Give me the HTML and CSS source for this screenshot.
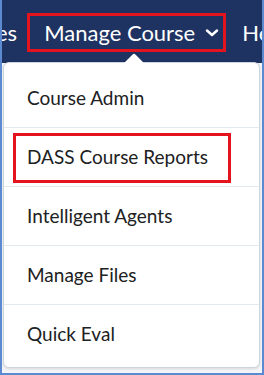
FILE: index.html
```html
<!DOCTYPE html>
<html lang="en">
<head>
    <meta charset="UTF-8">
    <meta name="viewport" content="width=device-width, initial-scale=1.0">
    <title>Manage Course</title>
    <link rel="stylesheet" href="styles.css">
</head>
<body>
    <div class="frame">
        <nav class="navbar">
            <span class="nav-item nav-cut">es</span>
            <span class="nav-item nav-active">
                Manage Course
                <svg class="chevron" width="14" height="8" viewBox="0 0 14 8">
                    <path d="M2 1.5 L7 6 L12 1.5" fill="none" stroke="#fff" stroke-width="2.4" stroke-linecap="round" stroke-linejoin="round"/>
                </svg>
            </span>
            <span class="nav-item">Help</span>
        </nav>

        <div class="page"></div>

        <div class="dropdown">
            <div class="arrow"></div>
            <ul class="menu">
                <li>Course Admin</li>
                <li class="marked">DASS Course Reports</li>
                <li>Intelligent Agents</li>
                <li>Manage Files</li>
                <li>Quick Eval</li>
            </ul>
        </div>
    </div>
</body>
</html>
```

FILE: styles.css
```css
* {
    margin: 0;
    padding: 0;
    box-sizing: border-box;
    font-family: Lato, "Open Sans", sans-serif;
}

body {
    background-color: #5b8ad0;
}

.frame {
    position: relative;
    width: 264px;
    height: 375px;
    overflow: hidden;
    border: 2px solid #5b8ad0;
    border-top: none;
    background-color: #f3f5f8;
}

.navbar {
    display: flex;
    align-items: center;
    height: 63px;
    padding-top: 1px;
    background-color: #1f3363;
    color: white;
    font-size: 22px;
    white-space: nowrap;
}

.nav-cut {
    margin-left: -6px;
}

.nav-active {
    display: flex;
    align-items: center;
    gap: 10px;
    height: 39px;
    margin-left: 10px;
    padding: 0 4px 0 14px;
    border: 3px solid #e3141e;
}

.nav-active + .nav-item {
    margin-left: 16px;
}

.chevron {
    margin-top: 2px;
}

.dropdown {
    position: absolute;
    top: 62px;
    left: 1px;
    width: 257px;
    height: 306px;
    padding: 6px 0 4px;
    background-color: white;
    border: 1px solid #cdd4dd;
    border-radius: 6px;
    box-shadow: 0 1px 3px rgba(0, 0, 0, 0.12);
}

.arrow {
    position: absolute;
    top: -7px;
    left: 123px;
    width: 14px;
    height: 14px;
    background-color: white;
    transform: rotate(45deg);
    border-radius: 2px 0 0 0;
}

.menu {
    list-style: none;
}

.menu li {
    position: relative;
    height: 59px;
    line-height: 58px;
    padding-left: 23px;
    font-size: 19px;
    color: #202122;
    border-bottom: 1px solid #e3e9f1;
}

.menu li:last-child {
    border-bottom: none;
}

.menu li.marked::after {
    content: "";
    position: absolute;
    top: 5px;
    left: 9px;
    width: 212px;
    height: 44px;
    border: 3px solid #e3141e;
}
```
